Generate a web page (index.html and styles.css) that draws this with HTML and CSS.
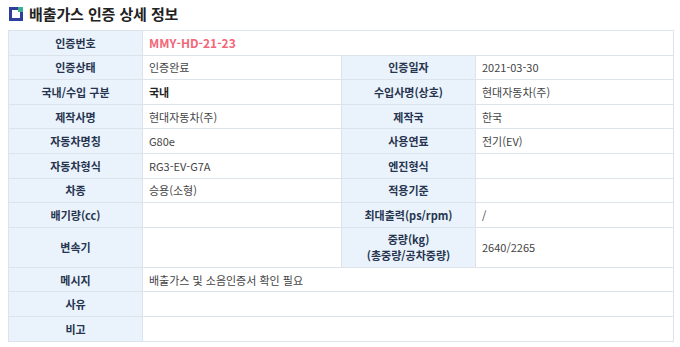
FILE: index.html
```html
<!DOCTYPE html>
<html lang="ko">
<head>
<meta charset="utf-8">
<link rel="stylesheet" href="styles.css">
</head>
<body>
<div class="page">
  <h2 class="title">
    <svg class="title-icon" width="14" height="14" viewBox="0 0 14 14">
      <rect x="0" y="0" width="14" height="14" fill="#2f3f9e"/>
      <rect x="3" y="3" width="8" height="8" fill="#ffffff"/>
      <rect x="9" y="0" width="5" height="5" fill="#3bb08f"/>
    </svg>
    <span>배출가스 인증 상세 정보</span>
  </h2>
  <table class="info">
    <colgroup>
      <col class="c-label"><col class="c-value"><col class="c-label"><col class="c-value2">
    </colgroup>
    <tr>
      <th>인증번호</th>
      <td colspan="3" class="red">MMY-HD-21-23</td>
    </tr>
    <tr>
      <th>인증상태</th><td>인증완료</td>
      <th>인증일자</th><td>2021-03-30</td>
    </tr>
    <tr>
      <th>국내/수입 구분</th><td class="strong">국내</td>
      <th>수입사명(상호)</th><td>현대자동차(주)</td>
    </tr>
    <tr>
      <th>제작사명</th><td>현대자동차(주)</td>
      <th>제작국</th><td>한국</td>
    </tr>
    <tr>
      <th>자동차명칭</th><td>G80e</td>
      <th>사용연료</th><td>전기(EV)</td>
    </tr>
    <tr>
      <th>자동차형식</th><td>RG3-EV-G7A</td>
      <th>엔진형식</th><td></td>
    </tr>
    <tr>
      <th>차종</th><td>승용(소형)</td>
      <th>적용기준</th><td></td>
    </tr>
    <tr>
      <th>배기량(cc)</th><td></td>
      <th>최대출력(ps/rpm)</th><td>/</td>
    </tr>
    <tr class="tall">
      <th>변속기</th><td></td>
      <th>중량(kg)<br>(총중량/공차중량)</th><td>2640/2265</td>
    </tr>
    <tr>
      <th>메시지</th>
      <td colspan="3">배출가스 및 소음인증서 확인 필요</td>
    </tr>
    <tr>
      <th>사유</th><td colspan="3"></td>
    </tr>
    <tr>
      <th>비고</th><td colspan="3"></td>
    </tr>
  </table>
</div>
</body>
</html>
```

FILE: styles.css
```css
html, body {
  margin: 0;
  padding: 0;
  background: #ffffff;
}
body {
  font-family: "Noto Sans CJK KR", "Noto Sans", sans-serif;
  color: #444;
}
.page {
  padding: 3px 7px 0 8px;
}
.title {
  display: flex;
  align-items: center;
  gap: 6px;
  margin: 0 0 6px 1px;
  height: 21px;
  font-size: 15px;
  font-weight: 700;
  color: #222;
  letter-spacing: -0.1px;
}
.title-icon {
  flex: none;
}
.info {
  width: 665px;
  border-collapse: collapse;
  table-layout: fixed;
  font-size: 11px;
  border: 1px solid #dde3ea;
}
.c-label { width: 134px; }
.c-value { width: 199px; }
.c-value2 { width: 198px; }
.info th,
.info td {
  height: 23.6px;
  padding: 0 6px;
  border: 1px solid #dde3ea;
  line-height: 14px;
}
.info th {
  background: #eaf3fb;
  color: #27344f;
  font-weight: 700;
  text-align: center;
}
.info td {
  color: #444;
  text-align: left;
}
.info tr.tall th,
.info tr.tall td {
  height: 39px;
  line-height: 16px;
}
.info td.red {
  color: #f2687a;
  font-weight: 700;
  font-size: 12px;
}
.info td.strong {
  font-weight: 700;
  color: #222;
}
```
